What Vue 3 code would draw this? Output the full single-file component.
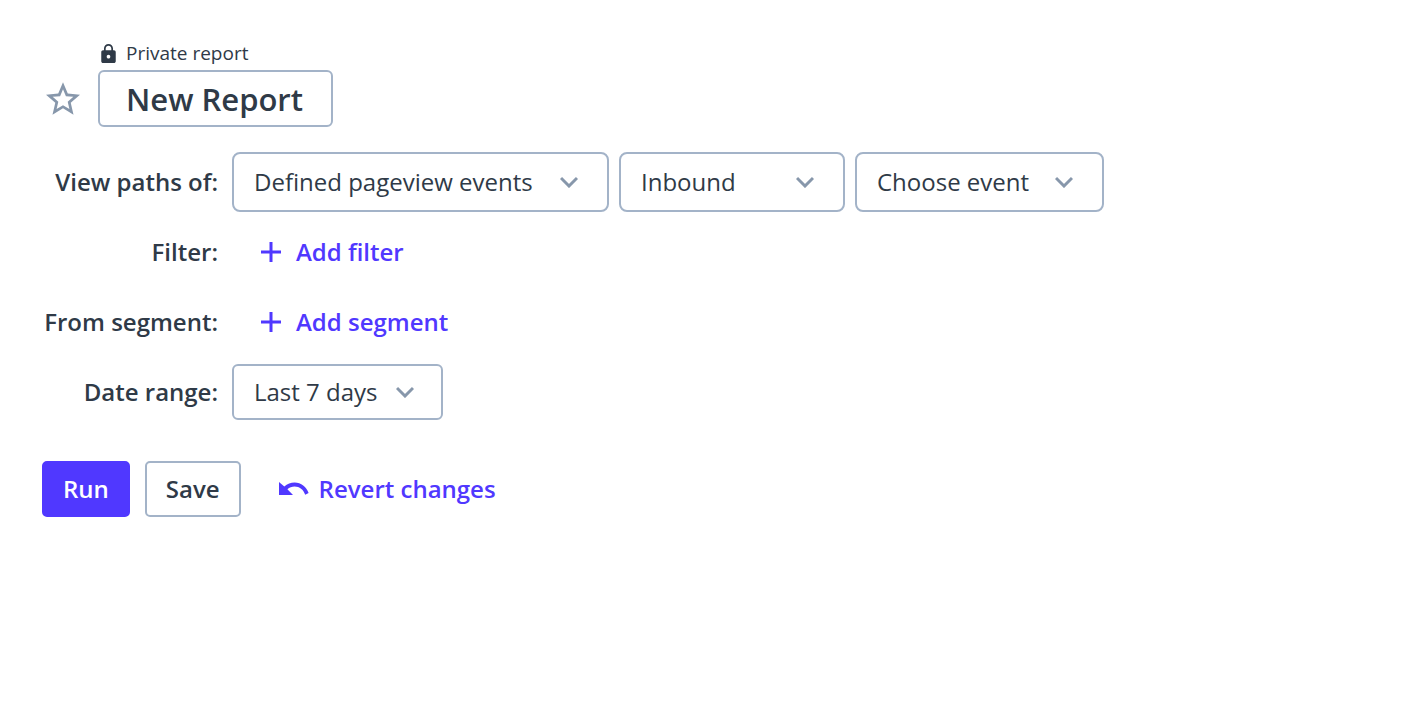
<script setup>
import { ref } from 'vue'

const reportName = ref('New Report')
const starred = ref(false)

const pathSelects = [
  { id: 'event-type', label: 'Event type', value: 'Defined pageview events', size: 'wide' },
  { id: 'direction', label: 'Direction', value: 'Inbound', size: 'narrow' },
  { id: 'event', label: 'Event', value: 'Choose event', size: 'medium' },
]
</script>

<template>
  <main class="report">
    <header class="header">
      <button
        class="star"
        type="button"
        aria-label="Favorite report"
        :aria-pressed="starred"
        @click="starred = !starred"
      >
        <svg viewBox="2 2 20 19" width="34" height="33" aria-hidden="true">
          <path d="M22 9.24l-7.19-.62L12 2 9.19 8.63 2 9.24l5.46 4.73L5.82 21 12 17.27 18.18 21l-1.63-7.03L22 9.24zM12 15.4l-3.76 2.27 1-4.28-3.32-2.88 4.38-.38L12 6.1l1.71 4.04 4.38.38-3.32 2.88 1 4.28L12 15.4z" />
        </svg>
      </button>
      <div class="title">
        <label class="privacy" for="report-name">
          <svg viewBox="4 1 16 21" width="15" height="19" aria-hidden="true">
            <path d="M18 8h-1V6c0-2.76-2.24-5-5-5S7 3.24 7 6v2H6c-1.1 0-2 .9-2 2v10c0 1.1.9 2 2 2h12c1.1 0 2-.9 2-2V10c0-1.1-.9-2-2-2zm-6 9c-1.1 0-2-.9-2-2s.9-2 2-2 2 .9 2 2-.9 2-2 2zm3.1-9H8.9V6c0-1.71 1.39-3.1 3.1-3.1 1.71 0 3.1 1.39 3.1 3.1v2z" />
          </svg>
          Private report
        </label>
        <input id="report-name" v-model="reportName" class="name" type="text" />
      </div>
    </header>

    <form class="form" @submit.prevent>
      <div class="fields">
        <label class="field-label" for="event-type">View paths of:</label>
        <div class="controls">
          <span v-for="s in pathSelects" :key="s.id" class="select" :class="s.size">
            <select :id="s.id" :aria-label="s.label">
              <option>{{ s.value }}</option>
            </select>
            <svg class="chevron" viewBox="0 0 18 12" width="18" height="12" aria-hidden="true">
              <path d="M1 2L9 10L17 2" />
            </svg>
          </span>
        </div>

        <label class="field-label" for="add-filter">Filter:</label>
        <div class="controls">
          <button id="add-filter" class="link add" type="button">
            <svg viewBox="0 0 22 22" width="22" height="22" aria-hidden="true">
              <path d="M11 1v20M1 11h20" />
            </svg>
            Add filter
          </button>
        </div>

        <label class="field-label" for="add-segment">From segment:</label>
        <div class="controls">
          <button id="add-segment" class="link add" type="button">
            <svg viewBox="0 0 22 22" width="22" height="22" aria-hidden="true">
              <path d="M11 1v20M1 11h20" />
            </svg>
            Add segment
          </button>
        </div>

        <label class="field-label" for="date-range">Date range:</label>
        <div class="controls">
          <span class="select date">
            <select id="date-range">
              <option>Last 7 days</option>
            </select>
            <svg class="chevron" viewBox="0 0 18 12" width="18" height="12" aria-hidden="true">
              <path d="M1 2L9 10L17 2" />
            </svg>
          </span>
        </div>
      </div>

      <div class="actions">
        <button class="btn primary" type="submit">Run</button>
        <button class="btn" type="button">Save</button>
        <button class="link revert" type="button">
          <svg viewBox="0 0 30 14" width="30" height="14" aria-hidden="true">
            <path d="M0 0L5.300 4.600C8.300 2 11.800.6 15.600.6c6.500 0 11.800 4.200 14 10.400l-3.400 1.700C24.400 7.600 20.500 4.500 15.600 4.500c-2.700 0-5.200 1-7.200 2.700L14 13H0z" />
          </svg>
          Revert changes
        </button>
      </div>
    </form>
  </main>
</template>

<style>
body {
  margin: 0;
  background: #fff;
}
</style>

<style scoped>
.report {
  padding: 41px 42px;
  color: #2f3a47;
  font-family: 'Open Sans', 'Noto Sans', sans-serif;
  font-size: 24px;
  line-height: 34px;
}

button,
input,
select {
  box-sizing: border-box;
  margin: 0;
  color: inherit;
  font: inherit;
}

button {
  cursor: pointer;
}

.header {
  display: flex;
  align-items: flex-end;
  gap: 14px;
}

.star {
  display: flex;
  align-items: center;
  justify-content: center;
  width: 42px;
  height: 58px;
  padding: 0;
  border: 0;
  background: none;
}

.star svg {
  flex: none;
  fill: #8797ab;
}

.title {
  display: flex;
  flex-direction: column;
  gap: 5px;
}

.privacy {
  display: flex;
  align-items: center;
  gap: 10px;
  padding-left: 3px;
  font-size: 19px;
  line-height: 24px;
}

.privacy svg {
  fill: #2f3a47;
}

.name {
  width: 235px;
  height: 57px;
  padding: 0 20px 0 26px;
  border: 2px solid #a3b3c8;
  border-radius: 6px;
  background: #fff;
  font-size: 31px;
  font-weight: 600;
}

.fields {
  display: grid;
  grid-template-columns: 176px 1fr;
  grid-auto-rows: 70px;
  align-items: center;
  column-gap: 14px;
  margin-top: 20px;
}

.field-label {
  font-weight: 600;
  text-align: right;
  white-space: nowrap;
}

.controls {
  display: flex;
  flex-wrap: wrap;
  gap: 10px;
}

.select {
  display: grid;
  align-items: center;
}

.select select,
.chevron {
  grid-area: 1 / 1;
}

.select select {
  width: 100%;
  height: 60px;
  padding: 0 50px 0 20px;
  border: 2px solid #a3b3c8;
  border-radius: 8px;
  background: #fff;
  appearance: none;
}

.chevron {
  justify-self: end;
  margin-right: 31px;
  fill: none;
  stroke: #8797ab;
  stroke-width: 3;
  pointer-events: none;
}

.wide {
  width: 377px;
}

.narrow {
  width: 226px;
}

.medium {
  width: 249px;
}

.date {
  width: 211px;
}

.date select {
  height: 56px;
  border-radius: 6px;
}

.date .chevron {
  margin-right: 29px;
}

.link {
  display: flex;
  align-items: center;
  padding: 0;
  border: 0;
  background: none;
  color: #5038ff;
  font-weight: 600;
}

.add {
  gap: 14px;
  padding-left: 28px;
}

.add svg {
  fill: none;
  stroke: #5038ff;
  stroke-width: 3;
}

.actions {
  display: flex;
  align-items: center;
  gap: 15px;
  margin-top: 34px;
}

.btn {
  height: 56px;
  padding: 0 19px;
  border: 2px solid #a3b3c8;
  border-radius: 5px;
  background: #fff;
  font-weight: 600;
}

.primary {
  border-color: #5038ff;
  background: #5038ff;
  color: #fff;
}

.revert {
  gap: 10px;
  padding-left: 23px;
}

.revert svg {
  fill: #5038ff;
}
</style>
